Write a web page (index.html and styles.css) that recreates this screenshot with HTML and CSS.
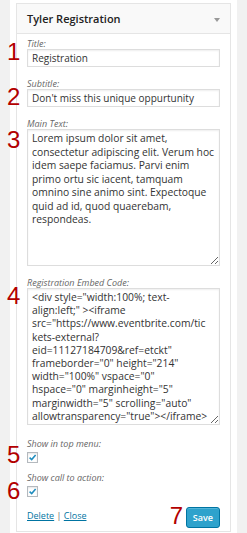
FILE: index.html
```html
<!DOCTYPE html>
<html>
<head>
  <title>Tyler Registration Widget</title>
  <link rel="stylesheet" href="styles.css">
</head>
<body>
  <div class="sidebar">
    <div class="widget">
      <div class="widget-top">
        <span class="widget-title">Tyler Registration</span>
        <span class="widget-arrow"></span>
      </div>
      <div class="widget-inside">
        <div class="field">
          <span class="marker marker-high">1</span>
          <label class="field-label">Title:</label>
          <input class="text-input" type="text" value="Registration">
        </div>
        <div class="field">
          <span class="marker">2</span>
          <label class="field-label">Subtitle:</label>
          <input class="text-input" type="text" value="Don't miss this unique oppurtunity">
        </div>
        <div class="field">
          <span class="marker marker-low">3</span>
          <label class="field-label">Main Text:</label>
          <textarea class="text-area main-text">Lorem ipsum dolor sit amet, consectetur adipiscing elit. Verum hoc idem saepe faciamus. Parvi enim primo ortu sic iacent, tamquam omnino sine animo sint. Expectoque quid ad id, quod quaerebam, respondeas.</textarea>
        </div>
        <div class="field field-wide">
          <span class="marker">4</span>
          <label class="field-label">Registration Embed Code:</label>
          <textarea class="text-area embed-code"><div style="width:100%; text-
align:left;" ><iframe
src="https://www.eventbrite.com/tic
kets-external?
eid=11127184709&ref=etckt"
frameborder="0" height="214"
width="100%" vspace="0"
hspace="0" marginheight="5"
marginwidth="5" scrolling="auto"
allowtransparency="true"></iframe>
</div><div style="font-family:Helvetica,
Arial; font-size:10px; padding:5px 0
5px; margin:2px; width:100%; text-
align:left;" ></div></textarea>
        </div>
        <div class="field check-field">
          <span class="marker marker-mid">5</span>
          <label class="field-label">Show in top menu:</label>
          <span class="check-box">
            <svg viewBox="0 0 9 9" width="9" height="9"><path d="M1.6 4.6 L3.7 6.6 L7.6 2" fill="none" stroke="#1e8cbe" stroke-width="1.5"/></svg>
          </span>
        </div>
        <div class="field check-field">
          <span class="marker">6</span>
          <label class="field-label">Show call to action:</label>
          <span class="check-box">
            <svg viewBox="0 0 9 9" width="9" height="9"><path d="M1.6 4.6 L3.7 6.6 L7.6 2" fill="none" stroke="#1e8cbe" stroke-width="1.5"/></svg>
          </span>
        </div>
        <div class="widget-actions">
          <div class="action-links">
            <a href="#">Delete</a> | <a href="#">Close</a>
          </div>
          <div class="save-wrap">
            <span class="marker">7</span>
            <button class="save-btn">Save</button>
          </div>
        </div>
      </div>
    </div>
  </div>
</body>
</html>
```

FILE: styles.css
```css
body {
  margin: 0;
  background: #f1f1f1;
  font-family: "Open Sans", sans-serif;
  color: #444;
}
.sidebar {
  margin-left: 10px;
  width: 215px;
  min-height: 533px;
  background: #fff;
  padding: 3px 6px 0;
}
.widget {
  border: 1px solid #e5e5e5;
  background: #fff;
}
.widget-top {
  display: flex;
  justify-content: space-between;
  align-items: center;
  height: 29px;
  padding: 0 10px;
  background: #f9f9f9;
  border-bottom: 1px solid #e5e5e5;
}
.widget-title {
  font-size: 11px;
  font-weight: 600;
  color: #222;
}
.widget-arrow {
  width: 0;
  height: 0;
  border-left: 3px solid transparent;
  border-right: 3px solid transparent;
  border-top: 4px solid #999;
  margin-top: 2px;
}
.widget-inside {
  padding: 5px 10px 0;
}
.field {
  position: relative;
  display: flex;
  flex-direction: column;
  margin-bottom: 12px;
}
.field-wide {
  margin-bottom: 14px;
}
.marker {
  position: absolute;
  left: -20px;
  top: 6px;
  font-family: "Liberation Sans", Arial, sans-serif;
  font-size: 24px;
  line-height: 1;
  color: #b30000;
}
.marker-high {
  top: 1px;
}
.marker-mid {
  top: 4px;
}
.marker-low {
  top: 9px;
}
.field-label {
  font-size: 9px;
  font-style: italic;
  color: #666;
  line-height: 10px;
  height: 10px;
}
.text-input,
.text-area {
  box-sizing: border-box;
  width: 193px;
  border: 1px solid #ddd;
  box-shadow: inset 0 1px 2px rgba(0,0,0,0.07);
  font-family: "Open Sans", sans-serif;
  font-size: 10px;
  color: #333;
  margin: 0;
  outline: none;
}
.text-input {
  height: 18px;
  padding: 0 4px;
}
.text-area {
  font-size: 10.3px;
  padding: 2px 4px;
  line-height: 13.5px;
  resize: vertical;
}
.main-text {
  height: 137px;
  overflow: hidden;
}
.embed-code {
  height: 137px;
  padding-right: 2px;
  overflow-y: scroll;
  line-height: 13.2px;
}
.embed-code::-webkit-scrollbar {
  width: 9px;
}
.embed-code::-webkit-scrollbar-track {
  background: #fff;
}
.embed-code::-webkit-scrollbar-thumb {
  background: #dcdcdc;
  border: 1px solid #bdbdbd;
  border-radius: 2px;
}
.check-field {
  margin-bottom: 10px;
}
.check-field .field-label {
  margin-bottom: 3px;
}
.check-box {
  display: flex;
  align-items: center;
  justify-content: center;
  width: 9px;
  height: 9px;
  border: 1px solid #b4b9be;
  background: #fff;
  box-shadow: inset 0 1px 2px rgba(0,0,0,0.1);
}
.widget-actions {
  display: flex;
  justify-content: space-between;
  align-items: flex-start;
  padding: 0 0 3px;
}
.action-links {
  padding-top: 2px;
  font-size: 9px;
  color: #666;
}
.action-links a {
  color: #0074a2;
}
.save-wrap {
  position: relative;
}
.save-wrap .marker {
  left: -16px;
  top: -3px;
}
.save-btn {
  display: block;
  height: 21px;
  padding: 0 6px;
  background: #2ea2cc;
  border: 1px solid #0074a2;
  border-radius: 3px;
  box-shadow: inset 0 1px 0 rgba(120,200,230,0.5);
  color: #fff;
  font-family: "Open Sans", sans-serif;
  font-size: 9px;
  font-weight: 600;
}
```
